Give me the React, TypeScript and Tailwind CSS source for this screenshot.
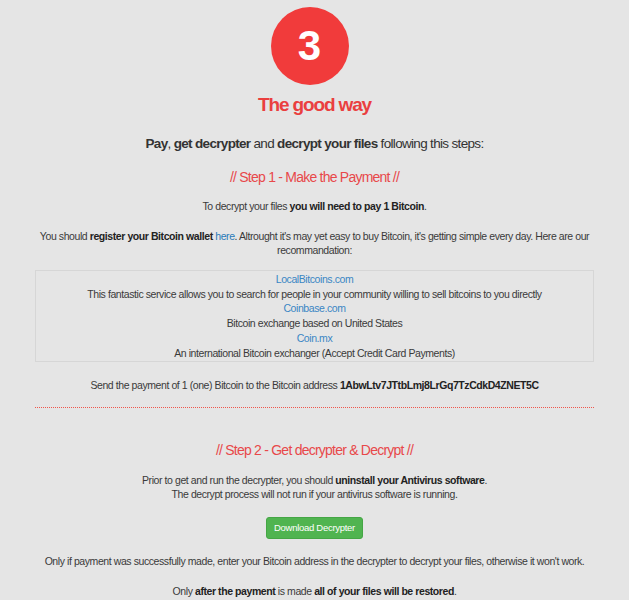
export default function App() {
  return (
    <div className="min-h-[600px] bg-[#e5e5e5] font-['Liberation_Sans',Arial,sans-serif] text-center text-[10.5px] leading-[14px] tracking-[-0.04em] text-[#3a3a3a]">
      <div className="flex flex-col items-center pt-[7px]">
        <div className="mr-[10px] flex h-[78px] w-[78px] items-center justify-center rounded-full bg-[#f13b3b] text-[42px] font-bold leading-none tracking-normal text-white">
          3
        </div>
        <h1 className="mt-[7px] text-[19px] font-bold leading-[26px] tracking-[-0.06em] text-[#ea3f3f]">The good way</h1>
        <p className="mt-[17px] text-[13.5px] leading-[17px] tracking-[-0.05em] text-[#333]">
          <b>Pay</b>, <b>get decrypter</b> and <b>decrypt your files</b> following this steps:
        </p>
      </div>

      <h2 className="mt-[16px] text-[14px] leading-[18px] tracking-[-0.055em] text-[#e8484a]">// Step 1 - Make the Payment //</h2>
      <p className="mt-[13px]">
        To decrypt your files <b className="text-[#222]">you will need to pay 1 Bitcoin</b>.
      </p>
      <p className="mx-auto mt-[16px] w-[572px]">
        You should <b className="text-[#222]">register your Bitcoin wallet</b>{" "}
        <span className="text-[#2a7ab8]">here</span>. Altrought it's may yet easy to buy Bitcoin, it's getting simple
        every day. Here are our recommandation:
      </p>

      <div className="mx-[35px] mt-[13px] border border-[#d6d6d6] py-[1px] leading-[14.7px]">
        <div className="text-[#3a86c4]">LocalBitcoins.com</div>
        <div>This fantastic service allows you to search for people in your community willing to sell bitcoins to you directly</div>
        <div className="text-[#3a86c4]">Coinbase.com</div>
        <div>Bitcoin exchange based on United States</div>
        <div className="text-[#3a86c4]">Coin.mx</div>
        <div>An international Bitcoin exchanger (Accept Credit Card Payments)</div>
      </div>

      <p className="mt-[16px]">
        Send the payment of 1 (one) Bitcoin to the Bitcoin address{" "}
        <b className="text-[#222]">1AbwLtv7JTtbLmj8LrGq7TzCdkD4ZNET5C</b>
      </p>

      <div className="mx-[35px] mt-[15px] border-t border-dotted border-[#f0564c]" />

      <h2 className="mt-[33px] text-[14px] leading-[18px] tracking-[-0.055em] text-[#e8484a]">
        // Step 2 - Get decrypter &amp; Decrypt //
      </h2>
      <p className="mt-[14px]">
        Prior to get and run the decrypter, you should <b className="text-[#222]">uninstall your Antivirus software</b>.
        <br />
        The decrypt process will not run if your antivirus software is running.
      </p>

      <div className="mt-[16px] flex justify-center">
        <button className="h-[22px] w-[97px] rounded-[3px] border border-[#45a645] bg-[#50b450] text-[9.5px] tracking-[-0.03em] text-white">
          Download Decrypter
        </button>
      </div>

      <p className="mt-[15px]">
        Only if payment was successfully made, enter your Bitcoin address in the decrypter to decrypt your files, otherwise it
        won't work.
      </p>
      <p className="mt-[16px]">
        Only <b className="text-[#222]">after the payment</b> is made <b className="text-[#222]">all of your files will be restored</b>.
      </p>
    </div>
  );
}
